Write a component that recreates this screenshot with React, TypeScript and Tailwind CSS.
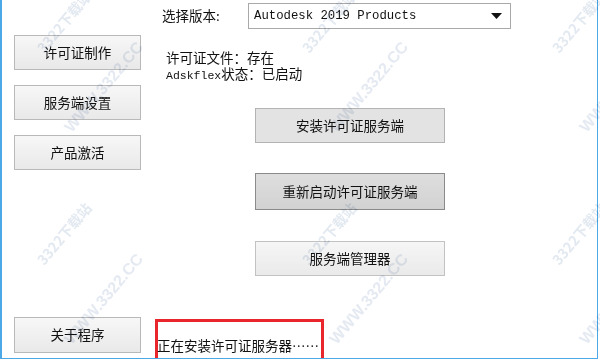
const cjk = "font-['Noto_Sans_CJK_SC',sans-serif]"

function LeftButton({ label, tall }: { label: string; tall?: boolean }) {
  return (
    <button
      type="button"
      className={`w-[127px] ${tall ? 'h-[36px]' : 'h-[35px]'} border border-[#b9b9b9] bg-gradient-to-b from-[#f7f7f7] to-[#e9e9e9] text-[13.5px] text-[#111] leading-none`}
    >
      {label}
    </button>
  )
}

function ActionButton({ label, pressed, light }: { label: string; pressed?: boolean; light?: boolean }) {
  const tone = pressed
    ? 'h-[37px] border-[#8a8a8a] bg-gradient-to-b from-[#dedede] to-[#d2d2d2]'
    : light
      ? 'h-[35px] border-[#c2c2c2] bg-gradient-to-b from-[#f6f6f6] to-[#eaeaea]'
      : 'h-[35px] border-[#b3b3b3] bg-[#e3e3e3]'
  return (
    <button
      type="button"
      className={`w-[190px] border text-[13.5px] text-[#111] leading-none ${tone}`}
    >
      {label}
    </button>
  )
}

// faint site watermark lying over the screenshot (multiplied so text stays dark)
function Watermark({ x, y }: { x: number; y: number }) {
  return (
    <div className="absolute" style={{ left: x, top: y }}>
      <div className="absolute left-[20px] top-[40px] -rotate-[50deg] origin-left text-[14px] font-bold text-[#e3e9f1] whitespace-nowrap">
        3322下载站
      </div>
      <div className="absolute left-[48px] top-[118px] -rotate-[50deg] origin-left text-[16px] font-bold text-[#e5eaf2] whitespace-nowrap font-['Liberation_Sans',sans-serif]">
        WWW.3322.CC
      </div>
    </div>
  )
}

export default function App() {
  return (
    <div className={`relative w-[600px] h-[360px] bg-white overflow-hidden ${cjk}`}>
      <div className="flex w-[598px] h-[359px] border-l-2 border-r border-b border-[#4aa9e6]">
        <div className="flex flex-col w-[153px] pl-[12px] pt-[35px] pb-[5px] gap-[15px]">
          <LeftButton label="许可证制作" />
          <LeftButton label="服务端设置" />
          <LeftButton label="产品激活" />
          <div className="mt-auto">
            <LeftButton label="关于程序" tall />
          </div>
        </div>

        <div className="flex flex-col flex-1">
          <div className="flex items-center mt-[3px]">
            <span className="ml-[7px] w-[86px] text-[13.5px] text-[#111] leading-none">选择版本:</span>
            <div className="flex items-center justify-between w-[263px] h-[26px] border border-[#a9a9a9] bg-white pl-[5px] pr-[6px]">
              <span className="font-['Liberation_Mono',monospace] text-[12.3px] text-[#111]">
                Autodesk 2019 Products
              </span>
              <svg width="11" height="6" viewBox="0 0 11 6" className="mr-[2px]">
                <path d="M0 0 H11 L5.5 6 Z" fill="#111" />
              </svg>
            </div>
          </div>

          <div className="ml-[11px] mt-[20px] text-[13.5px] text-[#111] leading-[16px]">
            <div>许可证文件：存在</div>
            <div className="flex items-baseline">
              <span className="font-['Liberation_Mono',monospace] text-[11.5px] leading-[16px]">Adskflex</span>
              <span>状态：已启动</span>
            </div>
          </div>

          <div className="ml-[100px] mt-[24px] flex flex-col">
            <ActionButton label="安装许可证服务端" />
            <div className="mt-[30px]">
              <ActionButton label="重新启动许可证服务端" pressed />
            </div>
            <div className="mt-[31px]">
              <ActionButton label="服务端管理器" light />
            </div>
          </div>

          <div className="mt-auto w-[169px] h-[39px] border-[3px] border-b-0 border-[#e8262b] bg-white">
            <div className="pt-[15px] -ml-[1px] text-[13.5px] text-[#111] leading-[16px] whitespace-nowrap">
              正在安装许可证服务器……
            </div>
          </div>
        </div>
      </div>

      <div className="absolute inset-0 pointer-events-none mix-blend-multiply">
        <Watermark x={20} y={0} />
        <Watermark x={285} y={0} />
        <Watermark x={535} y={0} />
        <Watermark x={20} y={212} />
        <Watermark x={285} y={212} />
        <Watermark x={535} y={212} />
      </div>
    </div>
  )
}
